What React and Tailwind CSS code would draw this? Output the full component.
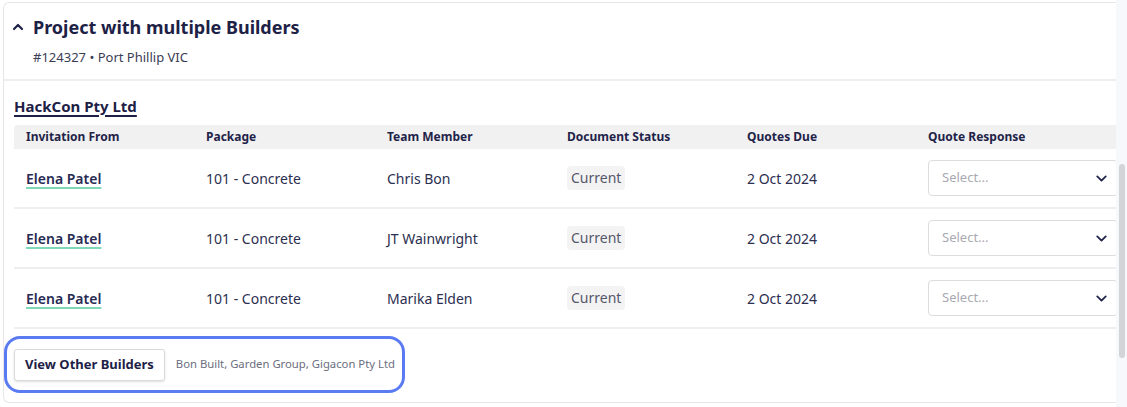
import { ChevronDown, ChevronUp } from "lucide-react";

const rows = [
  { from: "Elena Patel", pkg: "101 - Concrete", member: "Chris Bon", status: "Current", due: "2 Oct 2024" },
  { from: "Elena Patel", pkg: "101 - Concrete", member: "JT Wainwright", status: "Current", due: "2 Oct 2024" },
  { from: "Elena Patel", pkg: "101 - Concrete", member: "Marika Elden", status: "Current", due: "2 Oct 2024" },
];

function SelectBox() {
  return (
    <div className="flex items-center justify-between w-[190px] h-[36px] rounded-[4px] border border-[#dcdcdf] bg-white pl-[13px] pr-[9px]">
      <span className="text-[13px] text-[#a9aab2]">Select...</span>
      <ChevronDown size={17} strokeWidth={2.6} className="text-[#22264d] mr-[-2px]" />
    </div>
  );
}

export default function App() {
  return (
    <div className="flex w-[1127px] h-[407px] bg-white overflow-hidden text-[#272a4d]" style={{ fontFamily: '"Noto Sans", "Open Sans", sans-serif' }}>
      <div className="flex-1 pt-[2px] pl-[3px] overflow-hidden">
        <div className="h-[401px] rounded-l-[6px] border border-r-0 border-[#e7e7ea] overflow-hidden">
          {/* header */}
          <div className="px-[10px] pt-[11px] pb-[13px] border-b-2 border-[#eeeef0]">
            <div className="flex items-center">
              <ChevronUp size={16} strokeWidth={3.2} className="text-[#1d2146] ml-[-4px]" />
              <h1 className="ml-[7px] text-[18px] font-bold text-[#1d2146] leading-[26px]">Project with multiple Builders</h1>
            </div>
            <div className="pl-[19px] mt-[8px] text-[13px] text-[#3a3d55] leading-[18px]">#124327 • Port Phillip VIC</div>
          </div>

          {/* builder */}
          <div className="pl-[10px] pt-[13px]">
            <a className="text-[15px] font-bold text-[#1d2146] underline underline-offset-[3px] decoration-[1.5px] leading-[20px]">HackCon Pty Ltd</a>
            <div className="mt-[7px] w-[1120px]">
              <div className="flex h-[24px] items-center bg-[#f1f1f2] rounded-tl-[4px] text-[12px] font-bold text-[#1f2348]">
                <div className="w-[180px] pl-[12px]">Invitation From</div>
                <div className="w-[181px] pl-[12px]">Package</div>
                <div className="w-[180px] pl-[12px]">Team Member</div>
                <div className="w-[180px] pl-[12px]">Document Status</div>
                <div className="w-[181px] pl-[12px]">Quotes Due</div>
                <div className="flex-1 pl-[12px]">Quote Response</div>
              </div>
              {rows.map((r, i) => (
                <div key={i} className="flex h-[60px] items-center border-b-2 border-[#eeeef0] text-[14px] text-[#2c2f50]">
                  <div className="w-[180px] pl-[12px]">
                    <a className="font-semibold text-[#272a52] underline underline-offset-[3px] decoration-[#7dd9b6] decoration-[1.5px]">{r.from}</a>
                  </div>
                  <div className="w-[181px] pl-[12px]">{r.pkg}</div>
                  <div className="w-[180px] pl-[12px]">{r.member}</div>
                  <div className="w-[180px] pl-[12px]">
                    <span className="inline-block rounded-[4px] bg-[#f3f3f4] px-[4px] py-[3px] leading-[18px] text-[#55576a]">{r.status}</span>
                  </div>
                  <div className="w-[181px] pl-[12px]">{r.due}</div>
                  <div className="flex-1 pl-[12px]">
                    <SelectBox />
                  </div>
                </div>
              ))}
            </div>
          </div>

          {/* other builders */}
          <div className="pt-[7px]">
            <div className="inline-flex items-center gap-[11px] h-[57px] w-[401px] rounded-[16px] border-[3px] border-[#5b7bf3] pl-[7px] whitespace-nowrap">
              <button className="h-[32px] px-[10px] rounded-[3px] border border-[#dadade] bg-white shadow-sm text-[13px] font-bold text-[#1d2146] whitespace-nowrap">
                View Other Builders
              </button>
              <span className="text-[11.3px] text-[#6b6d7e]">Bon Built, Garden Group, Gigacon Pty Ltd</span>
            </div>
          </div>
        </div>
      </div>
      <div className="w-[11px] bg-[#f7f8fc] flex justify-center">
        <div className="mt-[164px] h-[194px] w-[6px] rounded-full bg-[#d3d4d8]"></div>
      </div>
    </div>
  );
}
